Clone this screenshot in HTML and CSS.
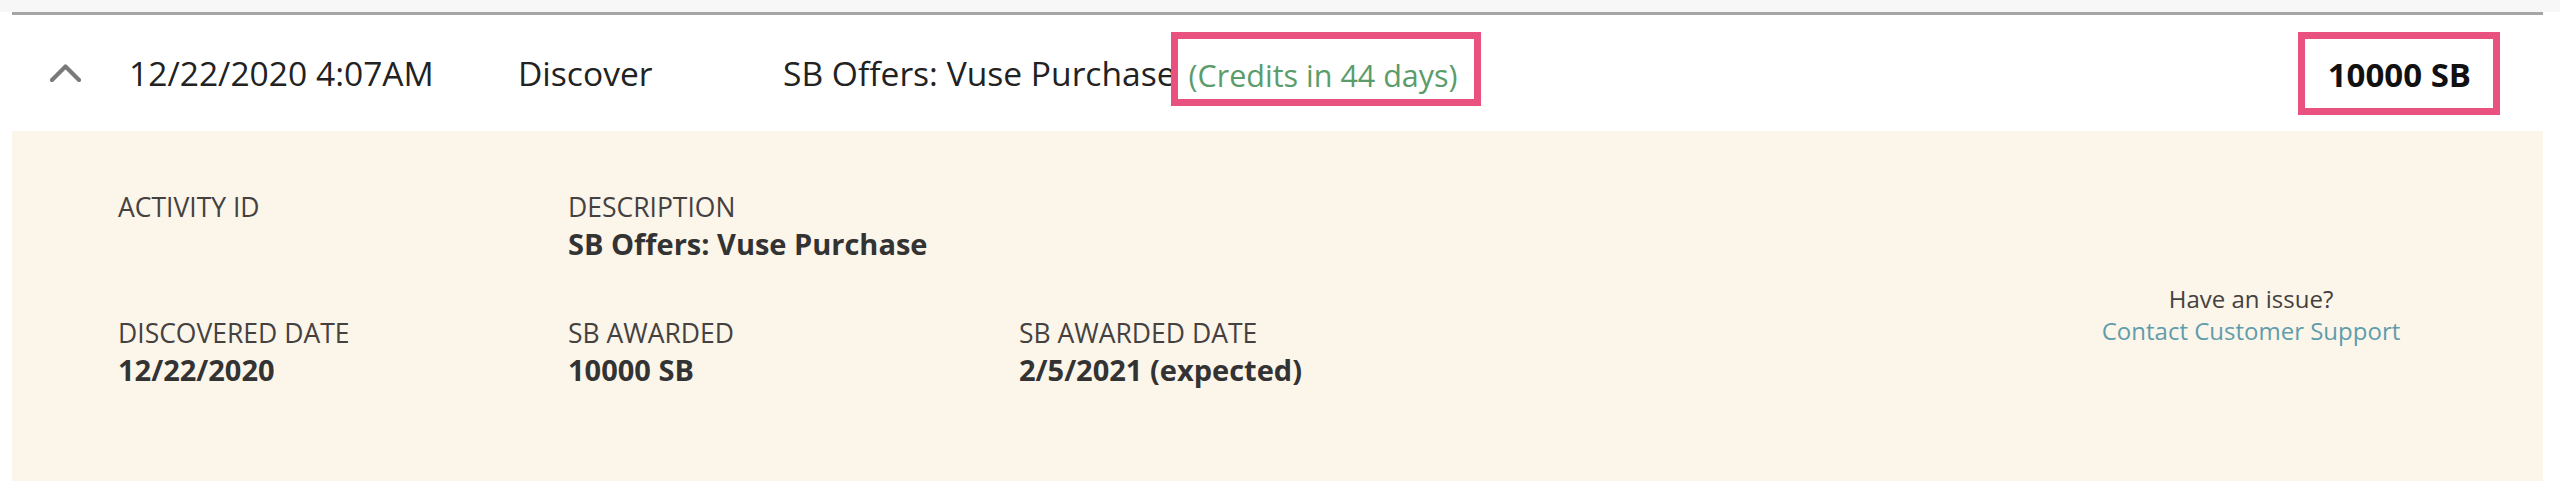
FILE: index.html
```html
<!DOCTYPE html>
<html lang="en">
<head>
<meta charset="utf-8">
<title>Activity</title>
<link rel="stylesheet" href="styles.css">
</head>
<body>
<div class="topstrip"></div>
<div class="activity">
  <div class="row">
    <span class="chev">
      <svg width="31" height="18" viewBox="0 0 31 18" aria-hidden="true">
        <polyline points="2,16 15.5,2.5 29,16" fill="none" stroke="#7a7a7a" stroke-width="4.2" stroke-linecap="round" stroke-linejoin="round"/>
      </svg>
    </span>
    <span class="cell date">12/22/2020 4:07AM</span>
    <span class="cell type">Discover</span>
    <span class="cell desc">SB Offers: Vuse Purchase<span class="credits">(Credits in 44 days)</span></span>
    <span class="amount">10000 SB</span>
  </div>
  <div class="details">
    <div class="grid">
      <div class="field">
        <div class="label">ACTIVITY ID</div>
      </div>
      <div class="field wide">
        <div class="label">DESCRIPTION</div>
        <div class="value">SB Offers: Vuse Purchase</div>
      </div>
      <div class="field">
        <div class="label">DISCOVERED DATE</div>
        <div class="value">12/22/2020</div>
      </div>
      <div class="field">
        <div class="label">SB AWARDED</div>
        <div class="value">10000 SB</div>
      </div>
      <div class="field">
        <div class="label">SB AWARDED DATE</div>
        <div class="value">2/5/2021 (expected)</div>
      </div>
    </div>
    <div class="support">
      <div class="issue">Have an issue?</div>
      <a class="contact" href="#">Contact Customer Support</a>
    </div>
  </div>
</div>
</body>
</html>
```

FILE: styles.css
```css
html, body {
  margin: 0;
  padding: 0;
  background: #ffffff;
  font-family: "Open Sans", "Noto Sans", sans-serif;
}

.topstrip {
  height: 12px;
  background: #f7f7f7;
}

.activity {
  margin: 0 17px 0 12px;
  border-top: 3px solid #a5a5a5;
}

.row {
  display: flex;
  align-items: center;
  height: 116px;
  padding-left: 38px;
  font-size: 33.6px;
  line-height: 45px;
  color: #222222;
  white-space: nowrap;
}

.chev {
  display: flex;
  width: 31px;
  height: 18px;
  margin-right: 48px;
}

.date {
  width: 389px;
}

.type {
  width: 265px;
}

.desc {
  display: flex;
  align-items: center;
}

.credits {
  margin-left: -5px;
  margin-bottom: 8px;
  border: 7px solid #e9527e;
  padding: 16px 16px 3px 11px;
  font-size: 30.5px;
  line-height: 41px;
  color: #5b9c6b;
}

.amount {
  margin-left: auto;
  margin-right: 43px;
  border: 7px solid #e9527e;
  padding: 13px 22px 11px 23px;
  font-size: 33px;
  font-weight: 700;
  color: #111111;
}

.details {
  display: flex;
  background: #fcf5ea;
  padding: 58px 0 92px 106px;
}

.grid {
  display: grid;
  grid-template-columns: 450px 451px 420px;
  row-gap: 52px;
  align-items: start;
}

.grid .wide {
  grid-column: 2 / 4;
}

.label {
  font-size: 26.5px;
  line-height: 36px;
  color: #444140;
}

.value {
  font-size: 29px;
  line-height: 38px;
  font-weight: 700;
  color: #333333;
}

.support {
  align-self: flex-start;
  margin: 94px 92px 0 auto;
  width: 400px;
  text-align: center;
  font-size: 24px;
  line-height: 32px;
}

.issue {
  color: #444140;
}

.contact {
  color: #5f9dac;
  text-decoration: none;
}
```
